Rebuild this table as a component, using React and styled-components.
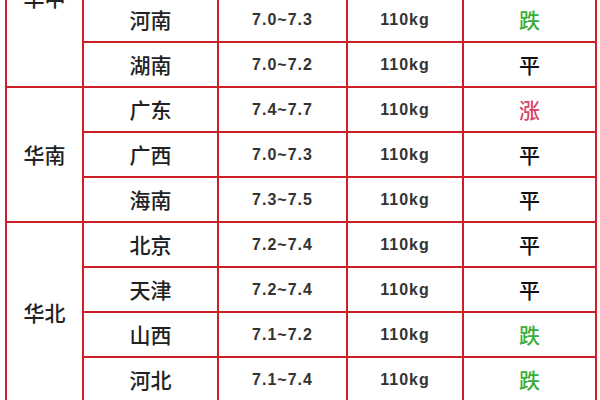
import React from 'react'
import styled, { createGlobalStyle } from 'styled-components'

var Global = createGlobalStyle`
  html, body {
    margin:0;
    padding:0;
    background:#fff;
  }
  body {
    width:600px;
    height:400px;
    overflow:hidden;
  }
`

var Viewport = styled.div`
  width:600px;
  height:400px;
  overflow:hidden;
  padding-left:5px;
  box-sizing:border-box;
  background:#fff;
`

// the screenshot is scrolled: the first rows of 华中 sit above the top edge
var Table = styled.table`
  margin-top:-94px;
  width:590px;
  table-layout:fixed;
  border-collapse:collapse;
  font-family:"Noto Sans CJK SC", "Noto Sans", sans-serif;

  col:nth-child(1){ width:77px; }
  col:nth-child(2){ width:135px; }
  col:nth-child(3){ width:129px; }
  col:nth-child(4){ width:116px; }
  col:nth-child(5){ width:133px; }
`

var Cell = styled.td`
  height:43px;
  padding:0;
  border:2px solid #cc1f27;
  text-align:center;
  vertical-align:middle;
  color:#222;
  font-size:21px;
  font-weight:500;
  line-height:1;
`

var Num = styled(Cell)`
  font-family:"Liberation Sans", Arial, sans-serif;
  font-weight:700;
  font-size:16px;
  letter-spacing:1px;
  color:#333;
`

var Trend = styled(Cell)`
  font-size:21px;
  color:${p => p.kind === '涨' ? '#d8436a' : p.kind === '跌' ? '#3aae38' : '#111'};
`

var groups = [
  {region:'华中', rows:[
    ['湖北', '7.0~7.3', '平'],
    ['江西', '7.0~7.3', '平'],
    ['河南', '7.0~7.3', '跌'],
    ['湖南', '7.0~7.2', '平'],
  ]},
  {region:'华南', rows:[
    ['广东', '7.4~7.7', '涨'],
    ['广西', '7.0~7.3', '平'],
    ['海南', '7.3~7.5', '平'],
  ]},
  {region:'华北', rows:[
    ['北京', '7.2~7.4', '平'],
    ['天津', '7.2~7.4', '平'],
    ['山西', '7.1~7.2', '跌'],
    ['河北', '7.1~7.4', '跌'],
  ]},
]

export default function App(){
  return (
    <Viewport>
      <Global />
      <Table>
        <colgroup>
          <col /><col /><col /><col /><col />
        </colgroup>
        <tbody>
          {groups.map(g => g.rows.map((r, i) => (
            <tr key={g.region + r[0]}>
              {i === 0 && <Cell rowSpan={g.rows.length}>{g.region}</Cell>}
              <Cell>{r[0]}</Cell>
              <Num>{r[1]}</Num>
              <Num>110kg</Num>
              <Trend kind={r[2]}>{r[2]}</Trend>
            </tr>
          )))}
        </tbody>
      </Table>
    </Viewport>
  )
}
